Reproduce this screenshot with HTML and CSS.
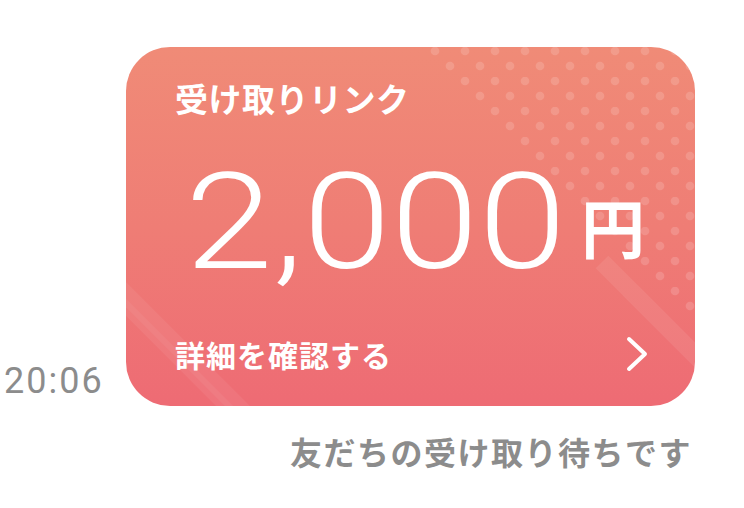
FILE: index.html
```html
<!DOCTYPE html>
<html lang="ja">
<head>
<meta charset="utf-8">
<link rel="stylesheet" href="styles.css">
</head>
<body>
<div class="screen">
  <div class="row">
    <div class="time">20:06</div>
    <div class="card">
      <svg class="deco" width="569" height="359" viewBox="0 0 569 359" aria-hidden="true">
        <defs>
          <pattern id="dots" x="0" y="0" width="30" height="30" patternUnits="userSpaceOnUse">
            <circle cx="9" cy="4" r="4.3" fill="#fff" fill-opacity="0.15"/>
            <circle cx="24" cy="19" r="4.3" fill="#fff" fill-opacity="0.15"/>
          </pattern>
          <clipPath id="dotclip">
            <polygon points="298,0 569,0 569,272"/>
          </clipPath>
        </defs>
        <rect x="0" y="0" width="569" height="359" fill="url(#dots)" clip-path="url(#dotclip)"/>
        <line x1="-30" y1="222" x2="140" y2="392" stroke="#fff" stroke-opacity="0.06" stroke-width="24"/>
        <line x1="-30" y1="226" x2="140" y2="396" stroke="#fff" stroke-opacity="0.05" stroke-width="6"/>
        <line x1="476" y1="215" x2="610" y2="349" stroke="#fff" stroke-opacity="0.08" stroke-width="18"/>
      </svg>
      <div class="title">受け取りリンク</div>
      <div class="amount"><span class="num">2,000</span><span class="yen">円</span></div>
      <div class="footer">
        <span class="detail">詳細を確認する</span>
        <svg class="chev" width="22" height="36" viewBox="0 0 22 36" aria-hidden="true">
          <polyline points="3,3 19,18 3,33" fill="none" stroke="#fff" stroke-width="4" stroke-linecap="round" stroke-linejoin="round"/>
        </svg>
      </div>
    </div>
  </div>
  <div class="status">友だちの受け取り待ちです</div>
</div>
</body>
</html>
```

FILE: styles.css
```css
html, body {
  margin: 0;
  padding: 0;
  background: #ffffff;
}

body {
  font-family: "Noto Sans CJK JP", "Noto Sans", sans-serif;
}

.screen {
  width: 744px;
  height: 508px;
  box-sizing: border-box;
  padding-top: 47px;
  overflow: hidden;
}

.row {
  display: flex;
  align-items: flex-end;
}

.time {
  width: 126px;
  box-sizing: border-box;
  padding-left: 4px;
  margin-bottom: 7px;
  font-family: Roboto, "Liberation Sans", sans-serif;
  font-size: 36px;
  line-height: 1;
  letter-spacing: 2px;
  color: #8c8c8c;
}

.card {
  position: relative;
  width: 569px;
  height: 359px;
  box-sizing: border-box;
  border-radius: 44px;
  overflow: hidden;
  background: linear-gradient(180deg, #f08b77 0%, #ef7d75 50%, #ee6b74 100%);
  color: #ffffff;
  display: flex;
  flex-direction: column;
  padding: 35px 47px 34px 49px;
}

.deco {
  position: absolute;
  left: 0;
  top: 0;
}

.title,
.amount,
.footer {
  position: relative;
}

.title {
  font-size: 33px;
  line-height: 1;
  font-weight: 700;
  letter-spacing: 0.5px;
}

.amount {
  margin-top: 41px;
  line-height: 1;
  white-space: nowrap;
}

.num {
  display: inline-block;
  font-family: Roboto, "Open Sans", sans-serif;
  font-weight: 300;
  font-size: 134px;
  letter-spacing: 0;
  margin-left: 10px;
  transform: scaleX(1.18);
  transform-origin: left bottom;
}

.yen {
  font-family: "Noto Sans CJK JP", sans-serif;
  font-weight: 700;
  font-size: 64px;
  vertical-align: 15px;
  margin-left: 73px;
}

.footer {
  margin-top: auto;
  display: flex;
  align-items: center;
  justify-content: space-between;
  height: 36px;
}

.detail {
  font-size: 30px;
  line-height: 1;
  font-weight: 700;
  letter-spacing: 1px;
}

.chev {
  display: block;
}

.status {
  margin-top: 29px;
  padding-right: 52px;
  text-align: right;
  font-size: 32px;
  line-height: 1;
  font-weight: 700;
  letter-spacing: 1.5px;
  color: #8c8c8c;
}
```
